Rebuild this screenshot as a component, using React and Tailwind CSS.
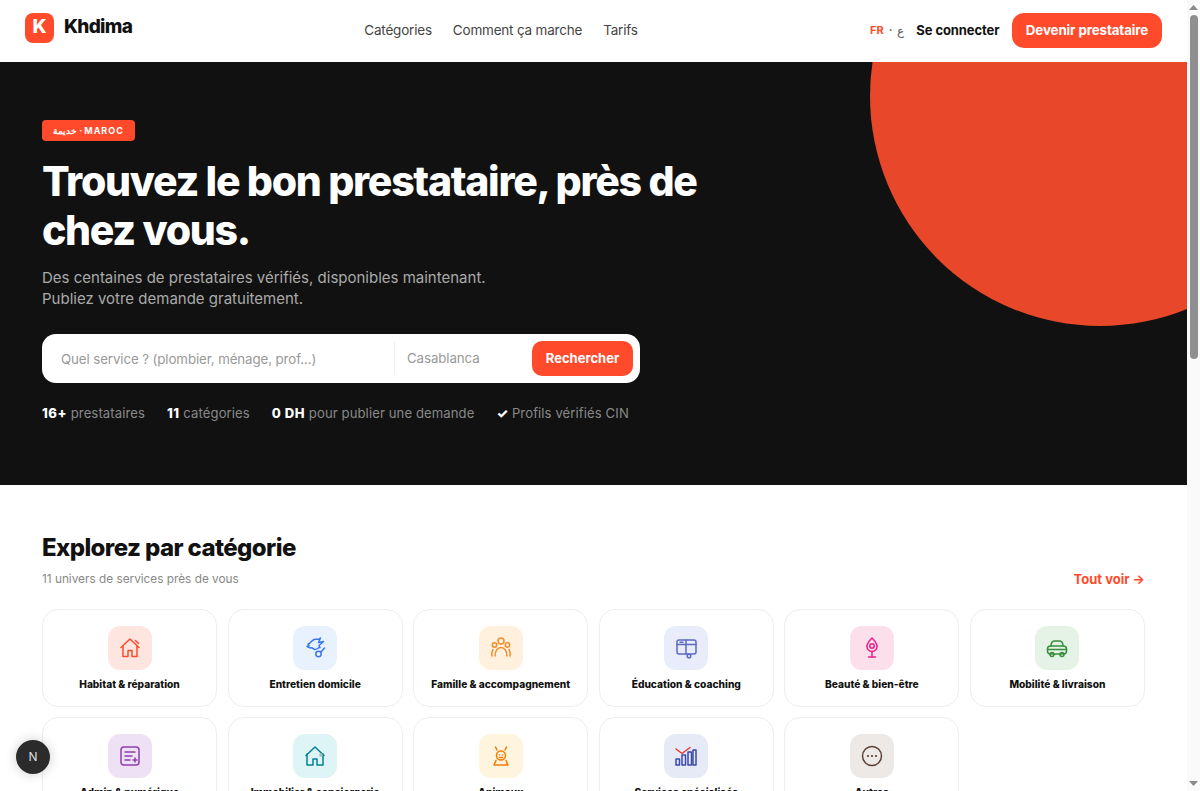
const font = "[font-family:Inter,'Noto_Sans',sans-serif]";

// stroke icons drawn on a 24 box, colour comes from the parent
function Ico({ color, children }) {
  return (
    <svg width="24" height="24" viewBox="0 0 24 24" fill="none" stroke={color} strokeWidth="1.5" strokeLinecap="round" strokeLinejoin="round">
      {children}
    </svg>
  );
}

const categories = [
  {
    label: "Habitat & réparation", bg: "bg-[#ffe5df]", color: "#ff4b2b",
    icon: <><path d="M3 11.500 12 3l9 8.500" /><path d="M5 10v10.500h5v-6h4v6h5V10" /><path d="m17.500 4.500 3 3" /></>,
  },
  {
    label: "Entretien domicile", bg: "bg-[#e8f2fe]", color: "#3b78e7",
    icon: <><path d="M5 8c2.500 0 2.500-3 6-4.500 3-1.200 4.500 1 6.500-1.500l-2 4.500 5-1-4.500 4 1 2c-2 0-3 2-5 2-2 0-2-2.500-4.500-1.500L4 10.500l2-1z" /><circle cx="15.500" cy="18" r="2.700" /><path d="m18 16 3.500-4" /></>,
  },
  {
    label: "Famille & accompagnement", bg: "bg-[#fff1de]", color: "#f28c28",
    icon: <><circle cx="12" cy="5" r="3" /><circle cx="5.500" cy="9" r="2.200" /><circle cx="18.500" cy="9" r="2.200" /><path d="M6 20c0-5 2.500-8.500 6-8.500s6 3.500 6 8.500" /><path d="M3 20c-.5-3 0-5 1-6.500M21 20c.5-3 0-5-1-6.500" /></>,
  },
  {
    label: "Éducation & coaching", bg: "bg-[#e9edfb]", color: "#5c6bc0",
    icon: <><rect x="3" y="4" width="19" height="14" rx="2" /><path d="M3 8.500h19M12 4v14M6 6.200h3" /><circle cx="15" cy="20" r="1.800" /></>,
  },
  {
    label: "Beauté & bien-être", bg: "bg-[#fbdfeb]", color: "#e91e8c",
    icon: <><path d="M12 2c3 3 5 6 5 8.500a5 5 0 0 1-10 0C7 8 9 5 12 2z" /><circle cx="12" cy="10" r="2.200" /><path d="M12 15.500V21M8.500 21h7" /></>,
  },
  {
    label: "Mobilité & livraison", bg: "bg-[#e4f3e5]", color: "#388e3c",
    icon: <><path d="M6 10c0-3.500 1.500-5 4-5h4c2.500 0 4 1.500 4 5" /><rect x="2.500" y="10" width="19" height="8" rx="3" /><path d="M2.500 13.500h19" /><circle cx="7" cy="18.500" r="2" /><circle cx="17" cy="18.500" r="2" /></>,
  },
  {
    label: "Admin & numérique", bg: "bg-[#eee0f5]", color: "#8e3fb0",
    icon: <><rect x="3" y="3" width="18" height="18" rx="3" /><path d="M7 8h10M7 12h7M7 16h5M15 16h4M17 14v4" /></>,
  },
  {
    label: "Immobilier & conciergerie", bg: "bg-[#def4f7]", color: "#00838f",
    icon: <><path d="M3 11.500 12 3l9 8.500" /><path d="M4 10v11h6v-6h4v6h6V10" /><circle cx="18" cy="11" r="1" stroke="#9fb8bb" /></>,
  },
  {
    label: "Animaux", bg: "bg-[#fff4de]", color: "#f57c00",
    icon: <><path d="M6.500 3l1.500 3M17.500 3 16 6" /><circle cx="12" cy="11.500" r="4.500" /><path d="M10.500 11h.01M13.500 11h.01M10.500 13.500h3" /><path d="M7 16.500 5 21h14l-2-4.500" /></>,
  },
  {
    label: "Services spécialisés", bg: "bg-[#e6e9f6]", color: "#3949ab",
    icon: <><rect x="2" y="15" width="3.500" height="6" /><rect x="8" y="11" width="3.500" height="10" /><rect x="14" y="8" width="3.500" height="13" /><rect x="19" y="6" width="3" height="15" /><path d="m2 5 6 4.500L16 3.500" stroke="#e53935" /></>,
  },
  {
    label: "Autres", bg: "bg-[#ede9e6]", color: "#5d4037",
    icon: <><circle cx="12" cy="12" r="9.500" /><path d="M8 12h.01M12 12h.01M16 12h.01" strokeWidth="2.200" /></>,
  },
];

function Nav() {
  return (
    <nav className="flex items-center justify-between h-[62px] pb-[1px] px-[25px] bg-white">
      <div className="flex items-center gap-[10px] w-[107px] mb-[6px]">
        <div className="flex items-center justify-center shrink-0 w-[29px] h-[30px] rounded-[8px] bg-[#ff4b2b] text-white text-[19px] font-extrabold">K</div>
        <span className="text-[19px] font-extrabold tracking-[-0.7px] text-[#111]">Khdima</span>
      </div>
      <div className="flex items-center gap-[21px] text-[13.5px] tracking-[-0.2px] text-[#444]">
        <a>Catégories</a>
        <a>Comment ça marche</a>
        <a>Tarifs</a>
      </div>
      <div className="flex items-center w-[292px]">
        <div className="flex items-center gap-[5px] text-[11px] font-bold">
          <span className="text-[#ff4b2b]">FR</span>
          <span className="text-[#555]">·</span>
          <span className="text-[#555] font-normal text-[12px]">ع</span>
        </div>
        <a className="ml-[12px] whitespace-nowrap text-[13px] font-bold tracking-[-0.1px] text-[#111]">Se connecter</a>
        <button className="ml-auto w-[150px] h-[35px] shrink-0 rounded-[12px] bg-[#ff4b2b] text-white text-[13.3px] font-bold tracking-[-0.1px]">Devenir prestataire</button>
      </div>
    </nav>
  );
}

function Hero() {
  return (
    <section className="relative h-[423px] overflow-hidden bg-[#111] px-[42px] pt-[58px]">
      <div className="absolute left-[870px] top-[-196px] w-[460px] h-[460px] rounded-full bg-[#e8472a]" />
      <div className="relative">
        <span className="flex items-center w-fit h-[21px] px-[11px] rounded-[4px] bg-[#ff4b2b] text-white text-[9px] font-bold tracking-[1px]">خديمة · MAROC</span>
        <h1 className="mt-[16px] w-[700px] text-[41px] leading-[49px] font-extrabold tracking-[-1.3px] text-white">Trouvez le bon prestataire, près de chez vous.</h1>
        <p className="mt-[12px] text-[15px] leading-[21px] text-[#aaa]">
          Des centaines de prestataires vérifiés, disponibles maintenant.<br />
          Publiez votre demande gratuitement.
        </p>
        <div className="mt-[25px] flex items-center w-[598px] h-[49px] rounded-[14px] bg-white pl-[19px] pr-[7px]">
          <input placeholder="Quel service ? (plombier, ménage, prof...)" className="w-[334px] h-[33px] outline-none text-[13.3px] tracking-[-0.1px] text-[#111] placeholder:text-[#999] border-r border-[#eee]" />
          <input placeholder="Casablanca" className="w-[125px] pl-[12px] outline-none text-[13.3px] tracking-[-0.1px] text-[#111] placeholder:text-[#999]" />
          <button className="ml-auto w-[101px] h-[35px] shrink-0 rounded-[10px] bg-[#ff4b2b] text-white text-[13px] font-bold">Rechercher</button>
        </div>
        <div className="mt-[21px] flex items-center gap-[22px] text-[13.1px] tracking-[0.1px] text-[#888]">
          <span><b className="text-white font-extrabold tracking-[0.5px]">16+</b> prestataires</span>
          <span><b className="text-white font-extrabold tracking-[0.5px]">11</b> catégories</span>
          <span><b className="text-white font-extrabold tracking-[0.5px]">0 DH</b> pour publier une demande</span>
          <span><b className="text-white font-extrabold">✓</b> Profils vérifiés CIN</span>
        </div>
      </div>
    </section>
  );
}

function CategoryCard({ cat }) {
  return (
    <a className="flex flex-col items-center h-[98px] rounded-[16px] border border-[#eee] bg-white pt-[16px]">
      <div className={`flex items-center justify-center w-[44px] h-[44px] rounded-[12px] ${cat.bg}`}>
        <Ico color={cat.color}>{cat.icon}</Ico>
      </div>
      <span className="mt-[7px] text-[10.2px] font-extrabold text-[#111]">{cat.label}</span>
    </a>
  );
}

function Categories() {
  return (
    <section className="bg-white px-[42px] pt-[48px]">
      <div className="flex items-end justify-between">
        <div>
          <h2 className="text-[24px] leading-[30px] font-extrabold tracking-[-0.6px] text-[#111]">Explorez par catégorie</h2>
          <p className="mt-[8px] text-[11.8px] leading-[16px] text-[#888]">11 univers de services près de vous</p>
        </div>
        <a className="text-[13px] leading-[16px] font-bold text-[#ff4b2b]">Tout voir →</a>
      </div>
      <div className="mt-[22px] grid grid-cols-6 gap-x-[10.5px] gap-y-[10px]">
        {categories.map((cat) => (
          <CategoryCard key={cat.label} cat={cat} />
        ))}
      </div>
    </section>
  );
}

function Scrollbar() {
  return (
    <div className="flex flex-col items-center w-[13px] shrink-0 bg-[#fafafa]">
      <svg width="9" height="6" viewBox="0 0 9 6" className="mt-[5px]"><path d="M4.500 0 9 5H0z" fill="#8a8a8a" /></svg>
      <div className="mt-[4px] w-[8px] h-[344px] rounded-full bg-[#8f8f8f]" />
      <svg width="9" height="6" viewBox="0 0 9 6" className="mt-auto mb-[5px]"><path d="M4.500 6 0 1h9z" fill="#8a8a8a" /></svg>
    </div>
  );
}

export default function App() {
  return (
    <div className={`relative flex h-[791px] overflow-hidden bg-white ${font}`}>
      <main className="flex-1 min-w-0">
        <Nav />
        <Hero />
        <Categories />
      </main>
      <Scrollbar />
      {/* dev badge bottom left */}
      <div className="absolute left-[16px] top-[740px] flex items-center justify-center w-[34px] h-[34px] rounded-full bg-[#2b2b2b] text-[#ddd] text-[12px] shadow-[0_0_12px_rgba(0,0,0,0.2)]">N</div>
    </div>
  );
}
